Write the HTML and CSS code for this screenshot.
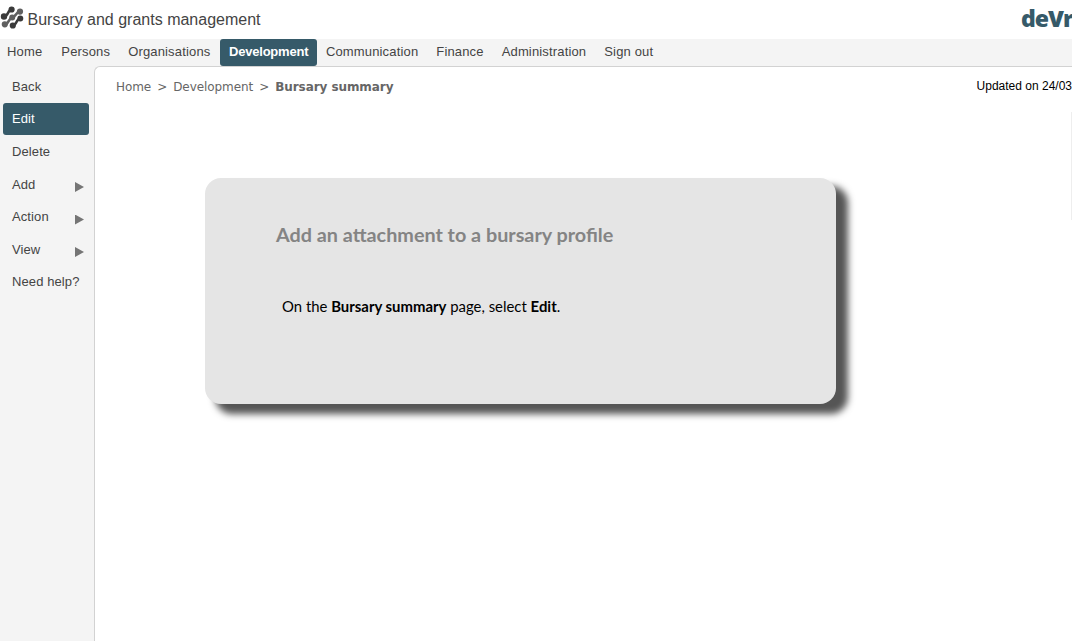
FILE: index.html
```
<!DOCTYPE html>
<html lang="en">
<head>
<meta charset="utf-8">
<title>Bursary and grants management</title>
<link rel="stylesheet" href="styles.css">
</head>
<body>
<header class="header">
  <svg class="mark" width="24" height="24" viewBox="0 6 24 24">
    <g stroke="#3a3a3a" fill="#3a3a3a" stroke-width="2.6">
      <path d="M4 16.500 C9 16 7 10 11.800 9.500" fill="none"/><circle cx="4" cy="16.500" r="1.900"/><circle cx="11.600" cy="9.500" r="1.800"/>
      <path d="M12.800 25.500 C17 25 16 19 20.300 18.500" fill="none"/><circle cx="12.800" cy="25.500" r="1.800"/><circle cx="20.300" cy="18.500" r="1.700"/>
    </g>
    <g stroke="#606060" fill="#606060" stroke-width="2.6">
      <path d="M4.800 24.500 C9 24.500 8.500 18 12.200 17.500 C16 17 15.500 12 20 11.500" fill="none"/><circle cx="4.800" cy="24.300" r="1.800"/><circle cx="12.200" cy="17.500" r="1.700"/><circle cx="20" cy="11.600" r="1.800"/>
    </g>
  </svg>
  <h1 class="title">Bursary and grants management</h1>
  <div class="brand">deVr</div>
</header>
<nav class="nav">
  <a class="tab">Home</a><a class="tab">Persons</a><a class="tab">Organisations</a><a class="tab active">Development</a><a class="tab">Communication</a><a class="tab">Finance</a><a class="tab">Administration</a><a class="tab">Sign out</a>
</nav>
<div class="body">
  <aside class="side">
    <a class="item">Back</a>
    <a class="item current">Edit</a>
    <a class="item">Delete</a>
    <a class="item">Add<i class="arrow"></i></a>
    <a class="item">Action<i class="arrow"></i></a>
    <a class="item">View<i class="arrow"></i></a>
    <a class="item">Need help?</a>
  </aside>
  <main class="main">
    <div class="top">
      <div class="crumbs"><span>Home</span><span class="sep">&gt;</span><span>Development</span><span class="sep">&gt;</span><b>Bursary summary</b></div>
      <div class="updated">Updated on 24/03</div>
    </div>
    <section class="card">
      <h2 class="heading">Add an attachment to a bursary profile</h2>
      <p class="text">On the <b>Bursary summary</b> page, select <b>Edit</b>.</p>
    </section>
    <div class="edge"></div>
  </main>
</div>
</body>
</html>
```
FILE: styles.css
```
* { box-sizing: border-box; }
body { margin: 0; width: 1072px; height: 641px; overflow: hidden; background: #fff; color: #444; font: 13px "Liberation Sans", Arial, sans-serif; }
.header { display: flex; height: 39px; }
.mark { margin-top: 6px; flex: none; }
.title { margin: 0 0 0 3.500px; font-size: 16px; font-weight: 400; line-height: 39px; letter-spacing: 0; white-space: nowrap; }
.brand { margin-left: auto; width: 51px; overflow: hidden; font: 800 23px/37px "Open Sans", sans-serif; letter-spacing: -1px; color: #365a69; }
.nav { display: flex; height: 28px; background: #f4f4f4; }
.tab { height: 27px; padding: 0 9px; line-height: 25px; letter-spacing: .16px; white-space: nowrap; }
.tab:first-child { padding-left: 7px; padding-right: 10px; }
.active { margin-left: 1px; padding: 0 8.500px; background: #365a69; color: #fff; border-radius: 3px; font-weight: 700; letter-spacing: -.2px; }
.body { display: grid; grid-template-columns: 94px 978px; height: 575px; margin-top: -1px; background: #f4f4f4; }
.side { display: flex; flex-direction: column; padding: 4px 5px 0 3px; }
.item { display: flex; justify-content: space-between; height: 32.500px; padding: 0 5px 0 9px; line-height: 33px; letter-spacing: .1px; white-space: nowrap; }
.current { background: #365a69; color: #fff; border-radius: 3px; line-height: 32px; }
.arrow { width: 9px; height: 10px; margin-top: 14.500px; background: #757575; clip-path: polygon(0 0, 100% 50%, 0 100%); flex: none; }
.main { position: relative; border: 1px solid #d2d2d2; border-width: 1px 0 0 1px; border-radius: 6px 0 0; background: #fff; }
.top { display: flex; justify-content: space-between; height: 40px; padding-left: 21px; line-height: 40px; }
.crumbs { display: flex; font-family: "DejaVu Sans", Verdana, sans-serif; font-size: 12px; letter-spacing: -.07px; color: #666; }
.sep { margin: 0 6px; }
.updated { color: #000; font-size: 12px; line-height: 38px; white-space: nowrap; }
.card { width: 631px; height: 226px; margin: 71px 0 0 110.400px; padding: 43px 0 0 70.600px; border-radius: 16px; background: #e5e5e5; box-shadow: 11px 9px 7px 1px #555; font-family: Lato, sans-serif; }
.heading { margin: 0; font-size: 19.800px; line-height: 26px; color: #848484; white-space: nowrap; }
.text { margin: 47px 0 0 6px; font-size: 14.900px; line-height: 24px; color: #000; white-space: nowrap; }
.edge { position: absolute; right: 0; top: 45px; width: 1px; height: 108px; background: #eee; }
```
